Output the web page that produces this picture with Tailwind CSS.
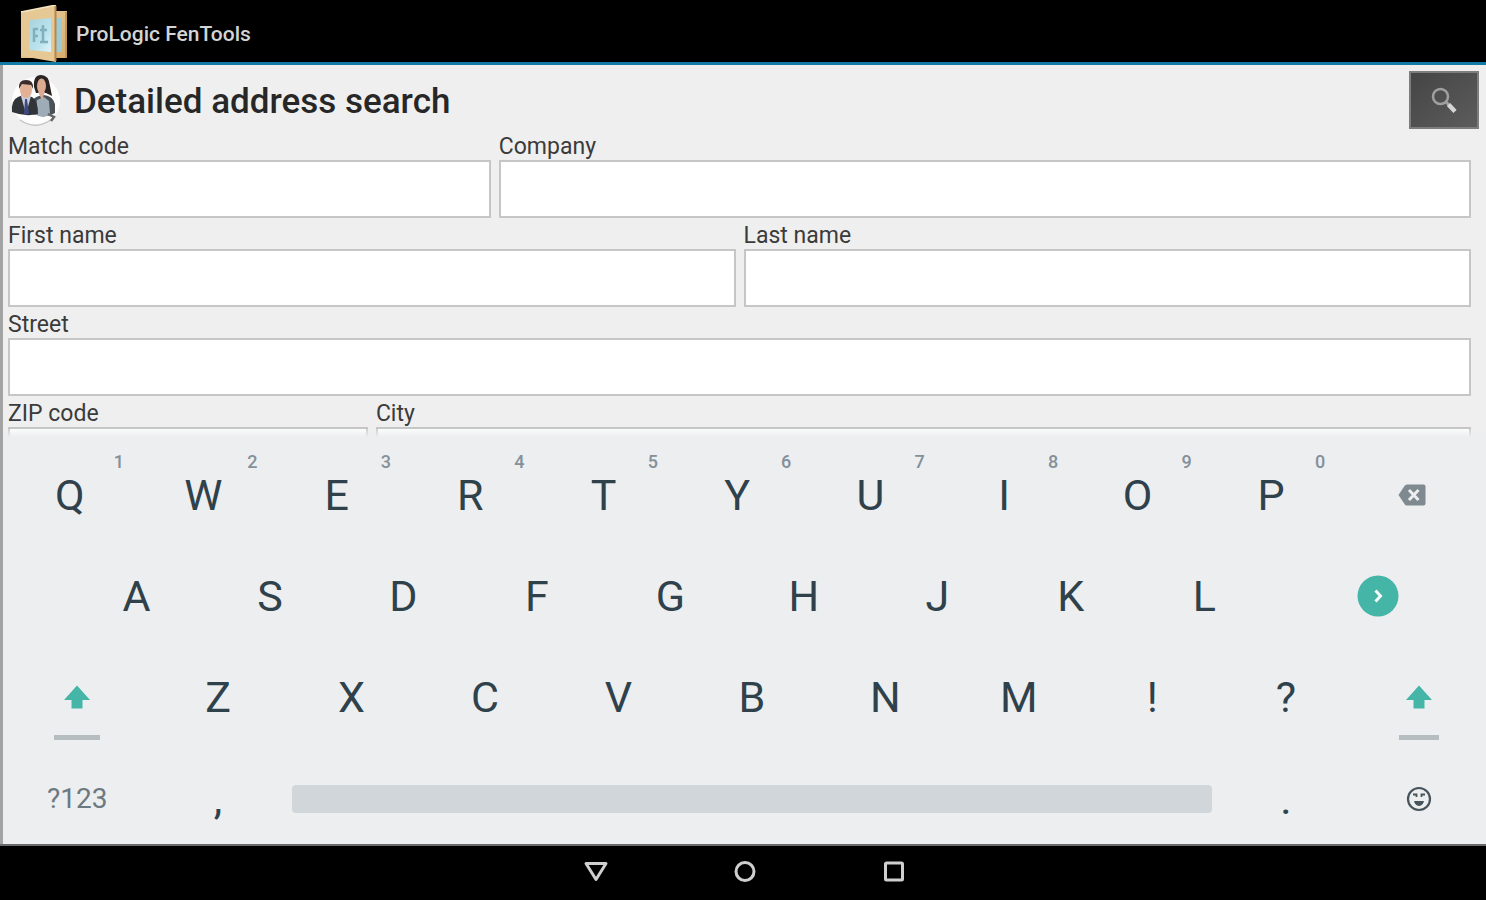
<!DOCTYPE html>
<html lang="en">
<head>
<meta charset="utf-8">
<meta name="viewport" content="width=device-width, initial-scale=1">
<title>ProLogic FenTools</title>
<script src="https://cdn.jsdelivr.net/npm/@tailwindcss/browser@4"></script>
</head>
<body class="flex h-screen flex-col overflow-hidden bg-black font-['Roboto',sans-serif]">

<header class="flex h-[65px] shrink-0 items-center gap-2 border-b-[3px] border-[#137ba3] bg-black pl-5 pt-1.5">
  <svg class="h-[58px] w-[48px]" viewBox="0 0 48 58" aria-hidden="true">
    <defs>
      <linearGradient id="wood" x1="0" y1="0" x2="1" y2="1"><stop offset="0" stop-color="#ecd2a2"/><stop offset="1" stop-color="#d6ab6e"/></linearGradient>
      <linearGradient id="glass" x1="0" y1="0" x2="1" y2="1"><stop offset="0" stop-color="#a9d3dc"/><stop offset=".6" stop-color="#b9e2ec"/><stop offset="1" stop-color="#e2f4f8"/></linearGradient>
    </defs>
    <path d="M1 6h46v47H1z" fill="url(#wood)"/>
    <path d="M36 13h6v34h-6z" fill="#9ccbd3"/>
    <path d="M46 7v46" stroke="#b98b50" stroke-width="1.500"/>
    <path d="M1 7 36 0v57L1 51z" fill="#e6c894"/>
    <path d="M1 7 36 0" fill="none" stroke="#f6e6c5" stroke-width="1.500"/>
    <path d="M35.500 1v55" stroke="#b9854b" stroke-width="2"/>
    <path d="M9 15 31 13v34L9 45z" fill="url(#glass)"/>
    <path d="M14 23v14M14 24h4M13 31h5M23 20v17M20 25h7M20 37h8" stroke="#7fb0bc" stroke-width="2.500" fill="none"/>
  </svg>
  <span class="text-[21px] leading-7 font-medium text-[#d4d4d4]">ProLogic FenTools</span>
</header>

<main class="min-h-0 flex-1 overflow-hidden border-l-[3px] border-[#a3a3a3] bg-[#efefef] pt-[6px] pl-[5px] text-[#3b3b3b]">
  <div class="mb-[5px] flex h-[58px] items-center pr-[7px]">
    <svg class="mr-[14px] h-[54px] w-[52px]" viewBox="0 0 52 54" aria-hidden="true">
      <circle cx="28" cy="28" r="24" fill="#fdfdfd"/>
      <path d="M12 47q16 11 32-1" fill="none" stroke="#c4c4c4" stroke-width="1.500"/>
      <path d="M24 41V31q1-7 7-8l5-1q9 1 11 9v9q-6 4-13 3z" fill="#4c5157"/>
      <path d="M27 41 29 27l7-3 5 4 1 13q-7 6-15 0z" fill="#9eacb7"/>
      <path d="M26 14q-1-12 7-12t9 11l2 10-6-3H28z" fill="#292321"/>
      <ellipse cx="33.500" cy="13" rx="4.500" ry="7.500" fill="#dcab92"/>
      <path d="M30 19h7l-3 8z" fill="#d9ab95"/>
      <path d="M4 39q-1-12 6-15l5-2 9 2q6 3 6 17-13 3-26-2z" fill="#303338"/>
      <path d="m13 23 5 18 5-18z" fill="#c9ceda"/><path d="m17 26-1 15h5l-2-15z" fill="#3d4a86"/>
      <ellipse cx="18" cy="17" rx="6" ry="8" fill="#e2b094"/>
      <path d="M11 16q-1-9 7-9t7 9l-2-4-9-1z" fill="#3a2c2a"/>
      <path d="m40 41 6 3-3 4" fill="none" stroke="#666" stroke-width="2.500"/>
    </svg>
    <h1 class="pt-1 text-[35px] leading-10 font-medium text-[#272727]">Detailed address search</h1>
    <button type="button" aria-label="Search" class="ml-auto flex h-[58px] w-[70px] items-center justify-center border-2 border-[#7d7d7d] bg-linear-to-br from-[#454545] to-[#5c5c5c]">
      <svg class="h-7 w-7" viewBox="0 0 28 28" fill="none" aria-hidden="true">
        <circle cx="10.500" cy="10.500" r="7.500" stroke="#a0a0a0" stroke-width="2.500"/>
        <path d="m16 16 3 3" stroke="#a0a0a0" stroke-width="3"/>
        <path d="m18.500 18.500 6.500 7" stroke="#d6d6d6" stroke-width="4.500"/>
      </svg>
    </button>
  </div>

  <form class="flex flex-col gap-[5px] pr-[15px] text-[23px] leading-[26px]">
    <div class="flex gap-2">
      <div class="flex w-[33%] flex-col"><label for="match">Match code</label><input id="match" class="h-[58px] w-full border-2 border-[#c6c6c6] bg-white px-2"></div>
      <div class="flex flex-1 flex-col"><label for="company">Company</label><input id="company" class="h-[58px] w-full border-2 border-[#c6c6c6] bg-white px-2"></div>
    </div>
    <div class="flex gap-2">
      <div class="flex flex-1 flex-col"><label for="first">First name</label><input id="first" class="h-[58px] w-full border-2 border-[#c6c6c6] bg-white px-2"></div>
      <div class="flex flex-1 flex-col"><label for="last">Last name</label><input id="last" class="h-[58px] w-full border-2 border-[#c6c6c6] bg-white px-2"></div>
    </div>
    <div class="flex flex-col"><label for="street">Street</label><input id="street" class="h-[58px] w-full border-2 border-[#c6c6c6] bg-white px-2"></div>
    <div class="flex gap-2">
      <div class="flex w-[24.6%] flex-col"><label for="zip">ZIP code</label><input id="zip" class="h-[58px] w-full border-2 border-[#c6c6c6] bg-white px-2"></div>
      <div class="flex flex-1 flex-col"><label for="city">City</label><input id="city" class="h-[58px] w-full border-2 border-[#c6c6c6] bg-white px-2"></div>
    </div>
  </form>
</main>

<section aria-label="Keyboard" class="relative shrink-0 border-l-[3px] border-[#a3a3a3] bg-[#eceef0] pt-[7px] text-[43px] leading-[52px] text-[#2f414a]">
  <div class="absolute inset-x-0 -top-2 h-2 bg-linear-to-b from-[#eceef0]/20 to-[#eceef0]"></div>
  <div class="flex h-[101px]">
    <button type="button" class="relative w-[9%]">Q<span class="absolute top-2 left-[83%] text-[18px] leading-5 font-medium text-[#84909a]">1</span></button>
    <button type="button" class="relative w-[9%]">W<span class="absolute top-2 left-[83%] text-[18px] leading-5 font-medium text-[#84909a]">2</span></button>
    <button type="button" class="relative w-[9%]">E<span class="absolute top-2 left-[83%] text-[18px] leading-5 font-medium text-[#84909a]">3</span></button>
    <button type="button" class="relative w-[9%]">R<span class="absolute top-2 left-[83%] text-[18px] leading-5 font-medium text-[#84909a]">4</span></button>
    <button type="button" class="relative w-[9%]">T<span class="absolute top-2 left-[83%] text-[18px] leading-5 font-medium text-[#84909a]">5</span></button>
    <button type="button" class="relative w-[9%]">Y<span class="absolute top-2 left-[83%] text-[18px] leading-5 font-medium text-[#84909a]">6</span></button>
    <button type="button" class="relative w-[9%]">U<span class="absolute top-2 left-[83%] text-[18px] leading-5 font-medium text-[#84909a]">7</span></button>
    <button type="button" class="relative w-[9%]">I<span class="absolute top-2 left-[83%] text-[18px] leading-5 font-medium text-[#84909a]">8</span></button>
    <button type="button" class="relative w-[9%]">O<span class="absolute top-2 left-[83%] text-[18px] leading-5 font-medium text-[#84909a]">9</span></button>
    <button type="button" class="relative w-[9%]">P<span class="absolute top-2 left-[83%] text-[18px] leading-5 font-medium text-[#84909a]">0</span></button>
    <button type="button" aria-label="Backspace" class="flex flex-1 items-center justify-center">
      <svg class="h-[22px] w-7" viewBox="0 0 28 22" aria-hidden="true"><path d="M9 .500h16.500q2 0 2 2v17q0 2-2 2H9Q7.500 21.500 6.500 20L.500 11l6-9Q7.500.500 9 .500z" fill="#7e8a90"/><path d="m11 6 9.500 10m0-10-9.500 10" stroke="#eceef0" stroke-width="3"/></svg>
    </button>
  </div>
  <div class="flex h-[101px] pl-[4.5%]">
    <button type="button" class="w-[9.424%]">A</button>
    <button type="button" class="w-[9.424%]">S</button>
    <button type="button" class="w-[9.424%]">D</button>
    <button type="button" class="w-[9.424%]">F</button>
    <button type="button" class="w-[9.424%]">G</button>
    <button type="button" class="w-[9.424%]">H</button>
    <button type="button" class="w-[9.424%]">J</button>
    <button type="button" class="w-[9.424%]">K</button>
    <button type="button" class="w-[9.424%]">L</button>
    <button type="button" aria-label="Next" class="flex flex-1 items-center justify-center">
      <svg class="h-[42px] w-[42px]" viewBox="0 0 42 42" fill="none" aria-hidden="true"><circle cx="21" cy="21" r="20.500" fill="#45b5a7"/><path d="m18.500 15.500 5 5.500-5 5.500" stroke="#f2fbfa" stroke-width="3"/></svg>
    </button>
  </div>
  <div class="flex h-[102px]">
    <button type="button" aria-label="Shift" class="flex flex-1 flex-col items-center pt-[39px]">
      <svg class="h-6 w-[26px]" viewBox="0 0 26 24" aria-hidden="true"><path d="M13 .500 26 15h-7.500v8.500h-11V15H0z" fill="#45b5a7"/></svg>
      <span class="mt-[26px] h-[5px] w-[46px] bg-[#b5bdc0]"></span>
    </button>
    <button type="button" class="w-[9%]">Z</button>
    <button type="button" class="w-[9%]">X</button>
    <button type="button" class="w-[9%]">C</button>
    <button type="button" class="w-[9%]">V</button>
    <button type="button" class="w-[9%]">B</button>
    <button type="button" class="w-[9%]">N</button>
    <button type="button" class="w-[9%]">M</button>
    <button type="button" class="w-[9%]">!</button>
    <button type="button" class="w-[9%]">?</button>
    <button type="button" aria-label="Shift" class="flex w-[9%] flex-col items-center pt-[39px]">
      <svg class="h-6 w-[26px]" viewBox="0 0 26 24" aria-hidden="true"><path d="M13 .500 26 15h-7.500v8.500h-11V15H0z" fill="#45b5a7"/></svg>
      <span class="mt-[26px] h-[5px] w-[40px] bg-[#b5bdc0]"></span>
    </button>
  </div>
  <div class="flex h-24 pt-[5px]">
    <button type="button" class="flex-1 text-[28px] text-[#6d7980]">?123</button>
    <button type="button" class="w-[9%]">,</button>
    <button type="button" aria-label="Space" class="flex w-[63%] items-center px-[7px]"><span class="h-7 w-full rounded-sm bg-[#d0d6d9]"></span></button>
    <button type="button" class="w-[9%]">.</button>
    <button type="button" aria-label="Emoji" class="flex w-[9%] items-center justify-center">
      <svg class="h-[26px] w-[26px]" viewBox="0 0 26 26" fill="none" stroke="#47545b" aria-hidden="true"><circle cx="13" cy="13" r="11" stroke-width="2.200"/><path d="M7 8.500h3.500v2.500M19 8.500h-3.500v2.500" stroke-width="1.800"/><path d="M8.500 15.500h9q-1 4-4.500 4t-4.500-4z" fill="#47545b" stroke-width="1"/></svg>
    </button>
  </div>
</section>

<nav aria-label="System" class="flex h-14 shrink-0 items-center justify-center gap-[121px] border-t-2 border-[#6a6a6a] bg-black pb-0.5 pl-[3px]">
  <button type="button" aria-label="Back"><svg class="h-7 w-7" viewBox="0 0 28 28" fill="none" aria-hidden="true"><path d="M4 5.500h20L14 21.500z" stroke="#cfcfcf" stroke-width="3" stroke-linejoin="round"/></svg></button>
  <button type="button" aria-label="Home"><svg class="h-7 w-7" viewBox="0 0 28 28" fill="none" aria-hidden="true"><circle cx="14" cy="13.500" r="9" stroke="#cfcfcf" stroke-width="3"/></svg></button>
  <button type="button" aria-label="Recent apps"><svg class="h-7 w-7" viewBox="0 0 28 28" fill="none" aria-hidden="true"><rect x="5.500" y="5" width="17" height="17" rx="1" stroke="#cfcfcf" stroke-width="3"/></svg></button>
</nav>
</body>
</html>
